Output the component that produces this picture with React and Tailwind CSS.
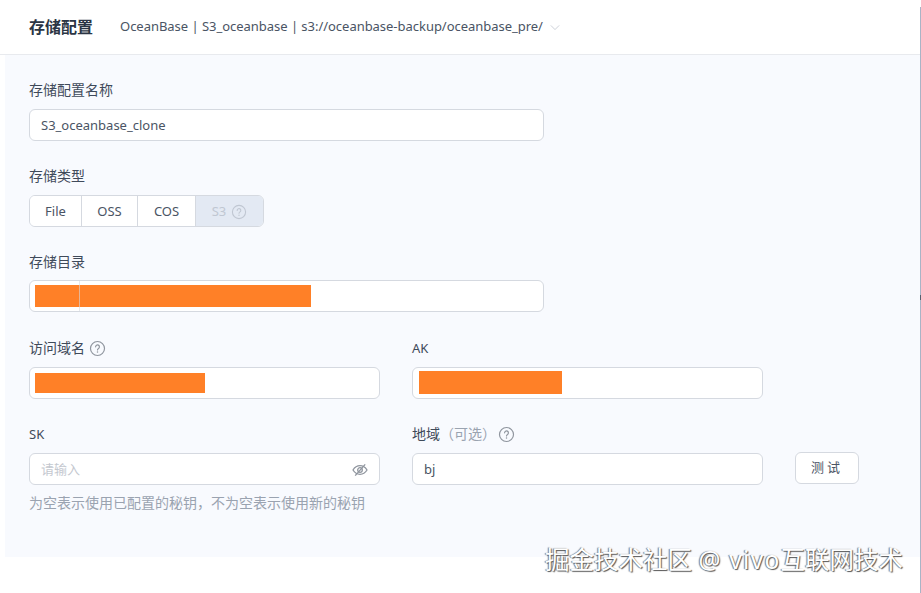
const cjk = "font-['Noto_Sans','Noto_Sans_CJK_SC',sans-serif]";

function HelpIcon({ className }) {
  return (
    <svg viewBox="0 0 16 16" fill="none" className={className}>
      <circle cx="8" cy="8" r="6.6" stroke="currentColor" strokeWidth="1.1" />
      <path d="M6.2 6.4a1.8 1.8 0 1 1 2.8 1.5c-.6.4-1 .7-1 1.4" stroke="currentColor" strokeWidth="1.1" strokeLinecap="round" />
      <circle cx="8" cy="11.2" r=".7" fill="currentColor" />
    </svg>
  );
}

function EyeOff() {
  return (
    <svg viewBox="0 0 16 16" fill="none" stroke="#8f959e" strokeWidth="1.3" className="h-4 w-4">
      <path d="M1 8c1.8-2.9 4.200-4.300 7-4.300S13.200 5.100 15 8c-1.800 2.900-4.200 4.300-7 4.300S2.800 10.900 1 8Z" />
      <circle cx="8" cy="8" r="2.300" />
      <path d="M13.200 2.400 3.200 13.600" />
    </svg>
  );
}

function Field({ label, children, hint, tight }) {
  return (
    <div className="flex flex-col">
      <div className="flex h-5 items-center text-[13px] leading-5 text-[#3f4a5a]">{label}</div>
      <div className={tight ? "mt-2" : "mt-[9px]"}>{children}</div>
      {hint && <p className="mt-[8px] text-[14px] leading-5 text-[#9aa3b0]">{hint}</p>}
    </div>
  );
}

function Input({ children, className = "" }) {
  return (
    <div className={`flex h-8 items-center rounded-md border border-[#d5d9e0] bg-white text-[13px] text-[#4a5464] ${className}`}>
      {children}
    </div>
  );
}

function Redacted({ width, height }) {
  return <div className="bg-[#ff8027]" style={{ width, height }} />;
}

const segments = [
  { name: "File", w: "w-[52px]" },
  { name: "OSS", w: "w-[56px]" },
  { name: "COS", w: "w-[58px]" },
];

export default function App() {
  return (
    <div className={`relative h-[593px] w-[921px] overflow-hidden bg-white ${cjk}`}>
      <header className="flex h-[55px] items-center border-b border-[#e8eaee] pl-[29px]">
        <h1 className="text-base font-semibold text-[#2b3544]">存储配置</h1>
        <span className="ml-[27px] text-[13px] tracking-[-0.03px] text-[#4a5464]">OceanBase | S3_oceanbase | s3://oceanbase-backup/oceanbase_pre/</span>
        <svg viewBox="0 0 12 8" fill="none" stroke="#c3c8d0" strokeWidth="1" className="ml-[7px] h-[7px] w-[10px]">
          <path d="M1 1.500 6 6.500l5-5" />
        </svg>
      </header>

      <main className="ml-[5px] mr-px flex h-[502px] flex-col bg-[#f8fafe] pl-6 pt-[25px]">
        <div className="flex w-[515px] flex-col gap-[25px]">
          <Field label={<span className="text-[14px]">存储配置名称</span>}>
            <Input className="pl-[11px] pt-px">S3_oceanbase_clone</Input>
          </Field>

          <Field label={<span className="text-[14px]">存储类型</span>}>
            <div className="flex h-8 w-[235px] overflow-hidden rounded-md border border-[#d5d9e0] text-[13px] text-[#4a5464]">
              {segments.map((s) => (
                <div key={s.name} className={`flex items-center justify-center border-r border-[#d5d9e0] bg-white pt-px ${s.w}`}>
                  {s.name}
                </div>
              ))}
              <div className="flex flex-1 items-center justify-center gap-[5px] bg-[#e3e9f3] pt-px text-[#c0c7d2]">
                S3
                <HelpIcon className="h-4 w-4" />
              </div>
            </div>
          </Field>

          <Field tight label={<span className="text-[14px]">存储目录</span>}>
            <div className="relative">
              <Input className="pl-[5px]">
                <Redacted width={276} height={22} />
              </Input>
              <div className="absolute left-[50px] top-0 h-8 w-px bg-[#d5d9e0]/60" />
            </div>
          </Field>
        </div>

        <div className="mt-[26px] grid w-[830px] grid-cols-[351px_351px_64px] gap-x-8 gap-y-[25px]">
          <Field
            label={
              <span className="flex items-center gap-1 text-[14px]">
                访问域名
                <HelpIcon className="h-[17px] w-[17px] text-[#8f959e]" />
              </span>
            }
          >
            <Input className="pl-[5px]">
              <Redacted width={170} height={20} />
            </Input>
          </Field>
          <Field label="AK">
            <Input className="items-end pb-1 pl-[6px]">
              <Redacted width={143} height={23} />
            </Input>
          </Field>
          <div />

          <Field label="SK" hint="为空表示使用已配置的秘钥，不为空表示使用新的秘钥">
            <Input className="justify-between pl-[11px] pr-[11px] pt-px text-[#c4c8cf]">
              请输入
              <EyeOff />
            </Input>
          </Field>
          <Field
            label={
              <span className="flex items-center text-[14px]">
                地域
                <span className="text-[#9aa3b0]">（可选）</span>
                <HelpIcon className="ml-[2px] h-[17px] w-[17px] text-[#8f959e]" />
              </span>
            }
          >
            <Input className="pl-[11px] pt-px">bj</Input>
          </Field>
          <div className="pt-[28px]">
            <button className="h-8 w-[64px] rounded-md border border-[#d5d9e0] bg-white text-[13px] tracking-[3px] text-[#4a5464]">
              测试
            </button>
          </div>
        </div>
      </main>

      <div className="absolute left-[545px] top-[545px] text-[24.5px] leading-[30px] whitespace-nowrap text-white [text-shadow:1px_1px_1px_#555,-1px_0_1px_#777]">
        掘金技术社区 <span className="tracking-[1.3px]">@ vivo</span>互联网技术
      </div>
      <div className="absolute bottom-0 right-0 top-[7px] w-px bg-[#a9b4c6]" />
      <div className="absolute right-0 top-[295px] h-[5px] w-px bg-[#55606f]" />
    </div>
  );
}
